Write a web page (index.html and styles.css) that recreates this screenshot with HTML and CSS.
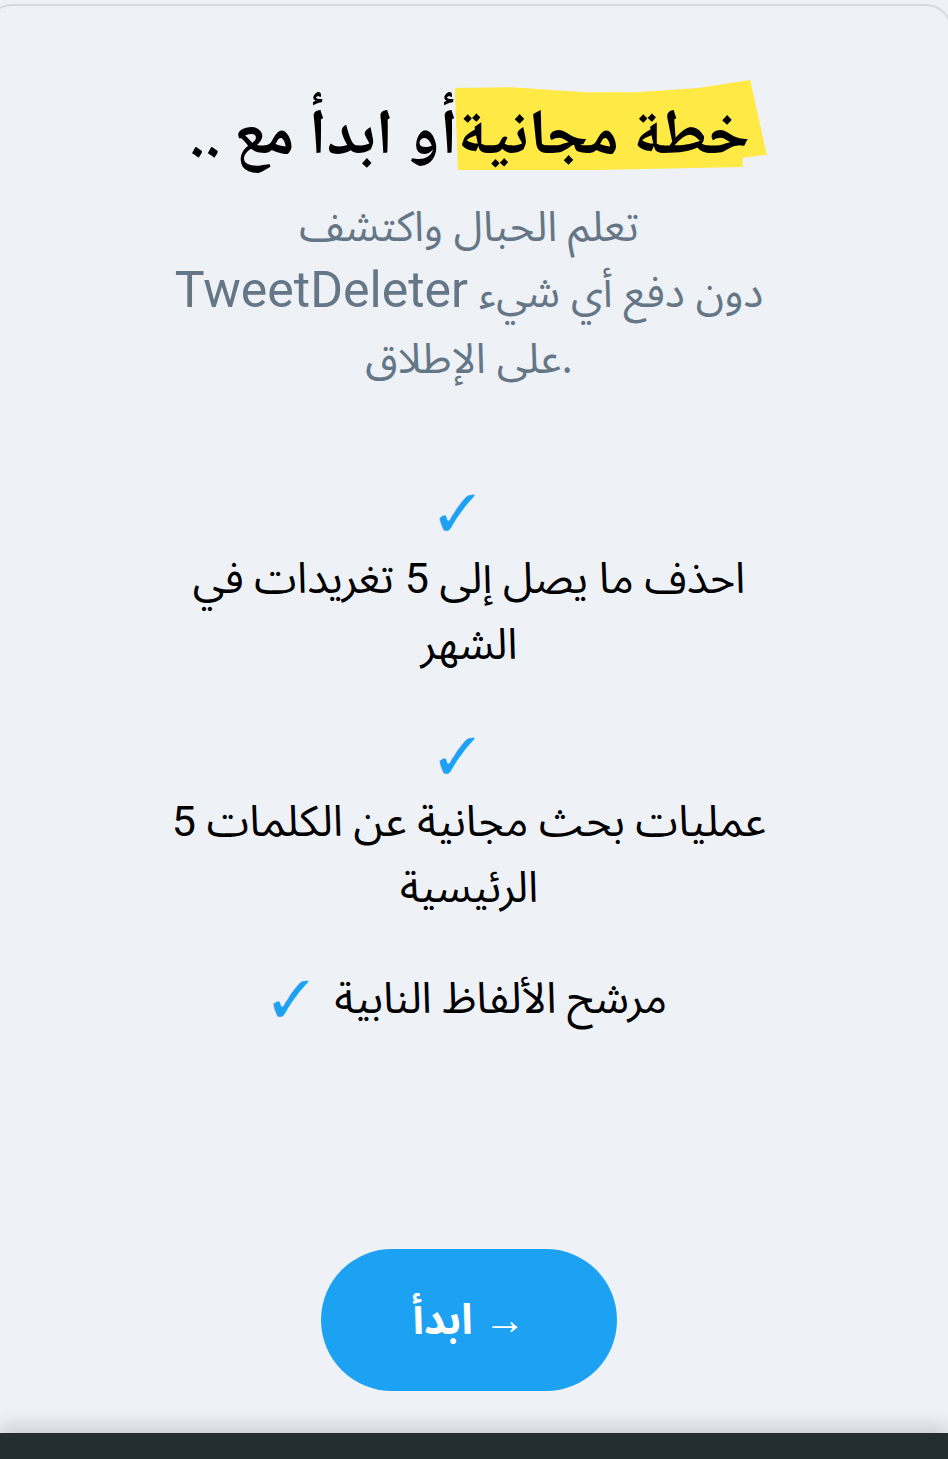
FILE: index.html
```html
<!DOCTYPE html>
<html lang="ar">
<head>
<meta charset="utf-8">
<title>TweetDeleter</title>
<link rel="stylesheet" href="styles.css">
</head>
<body>
<div class="page">
  <main class="card">
    <h1 class="title" dir="rtl"><span class="hl">خطة مجانية</span>أو ابدأ مع ..</h1>
    <p class="sub">تعلم الحبال واكتشف <span class="brand">TweetDeleter</span> دون دفع أي شيء على الإطلاق.</p>
    <ul class="features">
      <li><span class="check">✓</span><wbr><span class="ftxt">احذف ما يصل إلى 5 تغريدات في الشهر</span></li>
      <li><span class="check">✓</span><wbr><span class="ftxt">5 عمليات بحث مجانية عن الكلمات الرئيسية</span></li>
      <li><span class="check">✓</span><wbr><span class="ftxt">مرشح الألفاظ النابية</span></li>
    </ul>
    <a class="btn" href="#">ابدأ →</a>
  </main>
  <footer class="bar"></footer>
</div>
</body>
</html>
```
FILE: styles.css
```css
html, body {
  margin: 0;
  padding: 0;
}
body {
  background: #eef1f6;
  font-family: Roboto, "Noto Sans Arabic", sans-serif;
  overflow: hidden;
}
.page {
  height: 100vh;
  display: flex;
  flex-direction: column;
}
.card {
  flex: 1;
  margin: 4px -4px 0 -14px;
  border: 2px solid #d7dbe1;
  border-bottom: 0;
  border-radius: 26px 26px 0 0;
  background: #eef1f6;
  padding-top: 98px;
  display: flex;
  flex-direction: column;
  align-items: center;
}
.title {
  margin: 0;
  font-family: "Noto Naskh Arabic", serif;
  font-weight: bold;
  font-size: 64px;
  line-height: 73px;
  height: 73px;
  color: #000;
  text-align: center;
  white-space: nowrap;
}
.hl {
  position: relative;
  display: inline-block;
  z-index: 0;
}
.hl::before {
  content: "";
  position: absolute;
  left: -3px;
  right: -17px;
  top: -24px;
  bottom: 7px;
  background: #ffe945;
  z-index: -1;
  clip-path: polygon(0 9%, 18% 8%, 42% 13.6%, 58% 13.6%, 78% 9%, 94.7% 0, 100% 83%, 92.3% 86.4%, 92.3% 96.6%, 45% 100%, 1% 100%);
}
.sub {
  width: 620px;
  margin: 18px 0 0;
  font-family: "Noto Sans Arabic", Roboto, sans-serif;
  font-size: 42px;
  line-height: 66px;
  color: #657786;
  text-align: center;
}
.brand {
  font-family: Roboto, sans-serif;
  font-size: 50px;
  line-height: 40px;
}
.features {
  width: 620px;
  margin: 86px 0 0;
  padding: 0;
  list-style: none;
  text-align: center;
}
.features li {
  font-size: 43px;
  line-height: 66px;
  color: #000;
}
.features li + li {
  margin-top: 45px;
}
.check {
  display: inline-block;
  vertical-align: top;
  height: 66px;
  margin-right: 24px;
  color: #1da1f2;
  font-family: "Noto Sans Symbols 2", "Noto Sans Symbols2", sans-serif;
  font-size: 48px;
  line-height: 80px;
}
.ftxt {
  display: inline-block;
  vertical-align: top;
}
.btn {
  margin-top: 218px;
  width: 296px;
  height: 142px;
  border-radius: 71px;
  background: #1da1f2;
  color: #fff;
  font-family: "Noto Sans Arabic", Roboto, sans-serif;
  font-weight: bold;
  font-size: 42px;
  text-decoration: none;
  display: flex;
  align-items: center;
  justify-content: center;
}
.bar {
  height: 26px;
  background: #242e31;
  box-shadow: 0 -8px 18px rgba(0, 0, 0, 0.14);
}
```
